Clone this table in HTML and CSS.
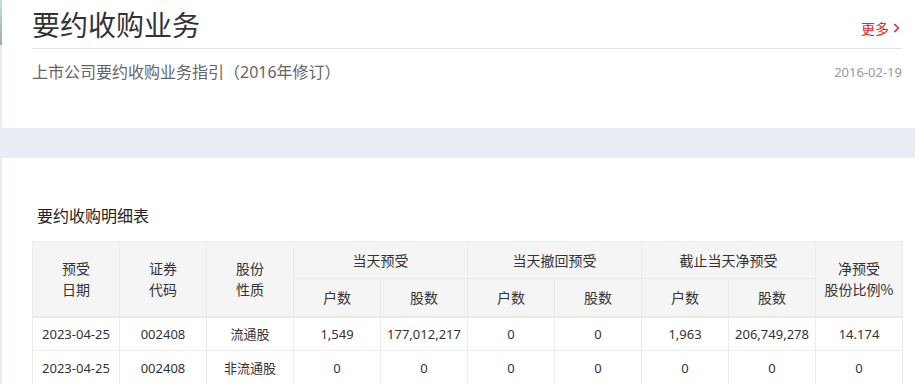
FILE: index.html
```html
<!DOCTYPE html>
<html lang="zh-CN">
<head>
<meta charset="utf-8">
<title>要约收购业务</title>
<link rel="stylesheet" href="styles.css">
</head>
<body>
<div class="page">
  <section class="card card-top">
    <div class="head">
      <h1 class="title">要约收购业务</h1>
      <a class="more" href="#">更多<svg class="chev" width="7" height="10" viewBox="0 0 7 10"><path d="M1.2 1 L5.4 5 L1.2 9" fill="none" stroke="currentColor" stroke-width="1.6"/></svg></a>
    </div>
    <div class="item">
      <a class="item-link" href="#">上市公司要约收购业务指引（2016年修订）</a>
      <span class="item-date">2016-02-19</span>
    </div>
  </section>
  <div class="band"></div>
  <section class="card card-table">
    <h2 class="sub-title">要约收购明细表</h2>
    <table class="grid">
      <colgroup>
        <col><col><col><col><col><col><col><col><col><col>
      </colgroup>
      <thead>
        <tr class="h1">
          <th rowspan="2">预受<br>日期</th>
          <th rowspan="2">证券<br>代码</th>
          <th rowspan="2">股份<br>性质</th>
          <th colspan="2">当天预受</th>
          <th colspan="2">当天撤回预受</th>
          <th colspan="2">截止当天净预受</th>
          <th rowspan="2">净预受<br>股份比例%</th>
        </tr>
        <tr class="h2">
          <th>户数</th><th>股数</th>
          <th>户数</th><th>股数</th>
          <th>户数</th><th>股数</th>
        </tr>
      </thead>
      <tbody>
        <tr>
          <td>2023-04-25</td><td>002408</td><td>流通股</td>
          <td>1,549</td><td>177,012,217</td>
          <td>0</td><td>0</td>
          <td>1,963</td><td>206,749,278</td>
          <td>14.174</td>
        </tr>
        <tr>
          <td>2023-04-25</td><td>002408</td><td>非流通股</td>
          <td>0</td><td>0</td>
          <td>0</td><td>0</td>
          <td>0</td><td>0</td>
          <td>0</td>
        </tr>
      </tbody>
    </table>
  </section>
</div>
</body>
</html>
```

FILE: styles.css
```css
* { box-sizing: border-box; }
html, body { margin: 0; padding: 0; }
body {
  width: 915px;
  height: 384px;
  overflow: hidden;
  font-family: "Noto Sans", "Noto Sans CJK SC", sans-serif;
  color: #333;
  background: linear-gradient(to bottom, #bfe0e6 0, #a6a8ab 45px, #e9edf5 45px, #e9edf5 100%);
}
.page {
  margin-left: 2px;
  width: 913px;
}
.card {
  background: #fff;
  padding: 0 13px 0 30px;
}
.card-top {
  height: 128px;
}
.head {
  height: 49px;
  display: flex;
  justify-content: space-between;
  align-items: flex-end;
  border-bottom: 1px solid #e3e3e3;
}
.title {
  margin: 0 0 4px 0;
  font-family: "Noto Sans CJK SC", sans-serif;
  font-weight: 400;
  font-size: 28px;
  line-height: 40px;
  color: #333;
}
.more {
  display: flex;
  align-items: center;
  gap: 4px;
  margin: 0 2px 10px 0;
  font-family: "Noto Sans CJK SC", sans-serif;
  font-size: 14px;
  line-height: 20px;
  color: #e0282e;
  text-decoration: none;
}
.chev { display: block; }
.item {
  display: flex;
  justify-content: space-between;
  align-items: center;
  margin-top: 11px;
  height: 24px;
}
.item-link {
  font-size: 16px;
  line-height: 24px;
  color: #666;
  text-decoration: none;
}
.item-date {
  font-size: 13px;
  color: #999;
}
.band {
  height: 30px;
  background: #e9ecf5;
}
.card-table {
  padding-top: 45px;
  height: 226px;
}
.sub-title {
  margin: 0 0 14px 5px;
  font-family: "Noto Sans CJK SC", sans-serif;
  font-weight: 400;
  font-size: 16px;
  line-height: 24px;
  color: #222;
}
.grid {
  width: 870px;
  table-layout: fixed;
  border-collapse: collapse;
}
.grid col { width: 87px; }
.grid th, .grid td {
  border: 1px solid #ececec;
  text-align: center;
  padding: 0;
  font-weight: 400;
}
.grid th {
  background: #f5f5f5;
  font-family: "Noto Sans CJK SC", sans-serif;
  font-size: 14px;
  line-height: 21px;
  color: #333;
}
.grid .h1 th { height: 37px; }
.grid .h2 th { height: 38px; border-bottom: 2px solid #e9e9e9; }
.grid .h1 th[rowspan] { border-bottom: 2px solid #e9e9e9; }
.grid td {
  height: 34px;
  font-size: 13px;
  color: #333;
}
```
